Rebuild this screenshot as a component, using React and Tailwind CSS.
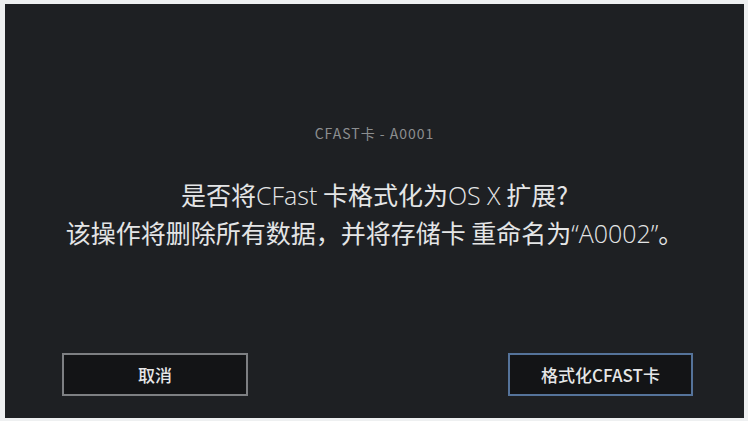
export default function App() {
  const latin = "font-['Open_Sans','Noto_Sans',sans-serif] font-light"
  return (
    <div className="w-[748px] h-[421px] bg-[#eef0f1] pt-[4px] pl-[5px] pr-[4px] pb-[3px]" style={{ fontFamily: '"Noto Sans CJK SC", "Noto Sans", sans-serif' }}>
      <div className="w-full h-full bg-[#1e2023] flex flex-col items-center">
        <div className="mt-[120px] text-[14px] leading-[18px] text-[#8c8e90] tracking-[1px]">CFAST卡 - A0001</div>
        <div className="mt-[34px] text-[25px] leading-[37px] text-[#e4e5e6] text-center">
          <div>是否将<span className={latin}>CFast</span> 卡格式化为<span className={latin}>OS X</span> 扩展?</div>
          <div>该操作将删除所有数据，并将存储卡 重命名为<span className={latin}>“A0002”</span>。</div>
        </div>
        <div className="mt-auto mb-[22px] w-full flex justify-between pl-[57px] pr-[51px]">
          <button className="w-[186px] h-[43px] border-2 border-[#7d7f82] bg-[#131416] text-[17px] text-[#e6e7e8] font-medium">取消</button>
          <button className="w-[185px] h-[43px] border-2 border-[#55739a] bg-[#131416] text-[17px] text-[#e6e7e8] font-medium">格式化CFAST卡</button>
        </div>
      </div>
    </div>
  )
}
